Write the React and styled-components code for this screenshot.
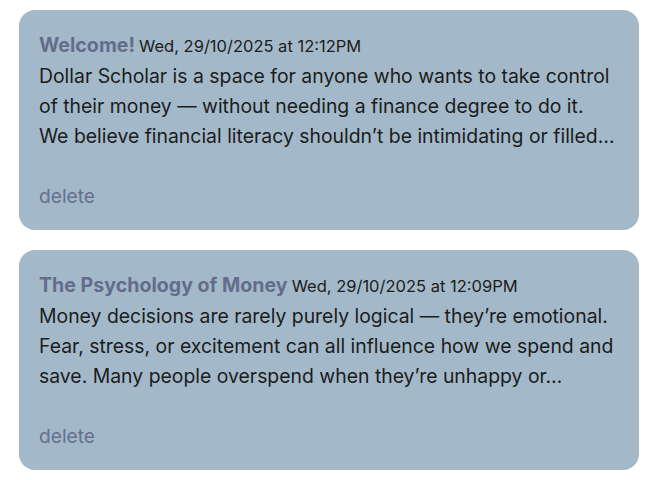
import React from 'react';
import styled, { createGlobalStyle } from 'styled-components';

const GlobalStyle = createGlobalStyle`
  body {
    margin: 0;
    background: #fff;
    font-family: Inter, "Noto Sans", sans-serif;
  }
`

const List = styled.div`
  display: flex;
  flex-direction: column;
  gap: 20px;
  padding: 10px 8px 0 19px;
  width: 620px;
`

const Card = styled.article`
  background: #a3b9c9;
  border-radius: 16px;
  padding: 20px 20px 19px;
  color: #1c1c1c;
`

const Head = styled.div`
  line-height: 30px;
`

const Title = styled.span`
  font-size: 19.6px;
  font-weight: 700;
  color: #636d8a;
`

const Stamp = styled.span`
  font-size: 16.5px;
  margin-left: 4px;
`

const Body = styled.p`
  margin: 0 0 30px;
  font-size: 19.4px;
  line-height: 30px;
`

const Delete = styled.button`
  display: block;
  border: 0;
  background: none;
  padding: 0;
  font: inherit;
  font-size: 19.2px;
  line-height: 30px;
  color: #66708c;
  cursor: pointer;
`

const posts = [
  {
    title: 'Welcome!',
    date: 'Wed, 29/10/2025 at 12:12PM',
    text: [
      'Dollar Scholar is a space for anyone who wants to take control',
      'of their money — without needing a finance degree to do it.',
      'We believe financial literacy shouldn’t be intimidating or filled…',
    ],
  },
  {
    title: 'The Psychology of Money',
    date: 'Wed, 29/10/2025 at 12:09PM',
    text: [
      'Money decisions are rarely purely logical — they’re emotional.',
      'Fear, stress, or excitement can all influence how we spend and',
      'save. Many people overspend when they’re unhappy or…',
    ],
  },
]

const App = () => {
  return (
    <>
      <GlobalStyle />
      <List>
        {posts.map((p) => (
          <Card key={p.title}>
            <Head>
              <Title>{p.title}</Title>
              <Stamp>{p.date}</Stamp>
            </Head>
            <Body>
              {p.text.map((l, i) => (
                <React.Fragment key={i}>{l}{i < p.text.length - 1 && <br />}</React.Fragment>
              ))}
            </Body>
            <Delete>delete</Delete>
          </Card>
        ))}
      </List>
    </>
  );
}

export default App;
